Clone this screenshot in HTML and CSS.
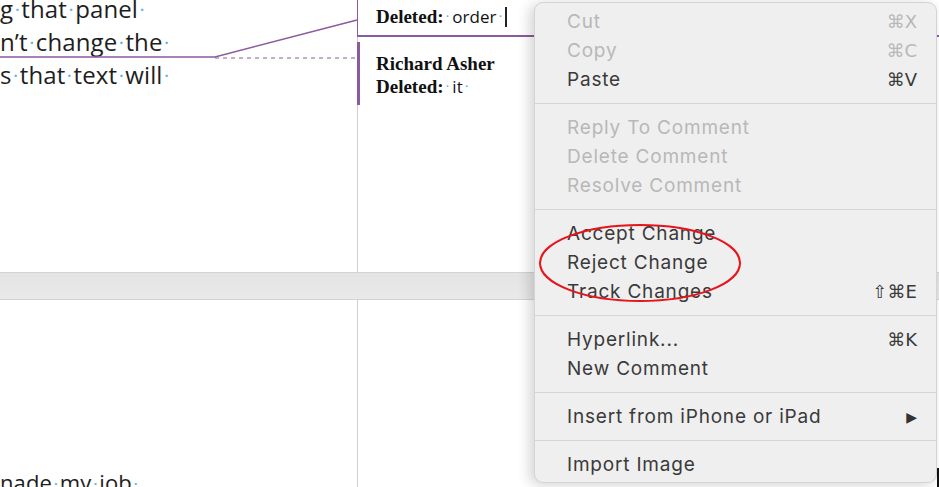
FILE: index.html
```html
<!DOCTYPE html>
<html>
<head>
<meta charset="utf-8">
<link rel="stylesheet" href="styles.css">
</head>
<body>
<div class="screen">
  <div class="area area-top">
    <div class="doc">
      <p class="line">g<span class="sp">·</span>that<span class="sp">·</span>panel<span class="sp">·</span></p>
      <p class="line">n’t<span class="sp">·</span>change<span class="sp">·</span>the<span class="sp">·</span></p>
      <p class="line">s<span class="sp">·</span>that<span class="sp">·</span>text<span class="sp">·</span>will<span class="sp">·</span></p>
    </div>
    <div class="margin">
      <div class="comment c1">
        <div class="cline"><b>Richard Asher</b></div>
        <div class="cline"><b>Deleted:</b><span class="sp">·</span><span class="ins">order</span><span class="sp">·</span><span class="caret"></span></div>
      </div>
      <div class="comment c2">
        <div class="cline"><b>Richard Asher</b></div>
        <div class="cline"><b>Deleted:</b><span class="sp">·</span><span class="ins">it</span><span class="sp">·</span></div>
      </div>
    </div>
  </div>
  <div class="band"></div>
  <div class="area area-bottom">
    <div class="doc doc-bottom">
      <p class="line">nade<span class="sp">·</span>my<span class="sp">·</span>job<span class="sp">·</span></p>
    </div>
    <div class="margin"></div>
  </div>

  <svg class="connector" width="360" height="80" viewBox="0 0 360 80">
    <polyline points="0,57 215,57 357,20" fill="none" stroke="#8c5a9f" stroke-width="1.5"/>
    <line x1="215" y1="58" x2="357" y2="58" stroke="#8c5a9f" stroke-width="1.2" stroke-dasharray="4 4"/>
  </svg>

  <div class="menu">
    <div class="item off"><span>Cut</span><span class="key">⌘X</span></div>
    <div class="item off"><span>Copy</span><span class="key">⌘C</span></div>
    <div class="item"><span>Paste</span><span class="key">⌘V</span></div>
    <div class="sep"></div>
    <div class="item off"><span>Reply To Comment</span></div>
    <div class="item off"><span>Delete Comment</span></div>
    <div class="item off"><span>Resolve Comment</span></div>
    <div class="sep"></div>
    <div class="item"><span>Accept Change</span></div>
    <div class="item"><span>Reject Change</span></div>
    <div class="item"><span>Track Changes</span><span class="key">⇧⌘E</span></div>
    <div class="sep"></div>
    <div class="item"><span>Hyperlink...</span><span class="key">⌘K</span></div>
    <div class="item"><span>New Comment</span></div>
    <div class="sep"></div>
    <div class="item"><span>Insert from iPhone or iPad</span><span class="key arrow">▶</span></div>
    <div class="sep"></div>
    <div class="item"><span>Import Image</span></div>
  </div>

  <svg class="circle" width="206" height="82" viewBox="0 0 206 82">
    <ellipse cx="103" cy="40" rx="100" ry="38" fill="none" stroke="#e8141b" stroke-width="2"/>
  </svg>
  <div class="edge-mark"></div>
</div>
</body>
</html>
```

FILE: styles.css
```css
html, body {
  margin: 0;
  padding: 0;
  background: #ffffff;
}
.screen {
  position: relative;
  width: 939px;
  height: 487px;
  overflow: hidden;
  background: #ffffff;
}
.area {
  display: flex;
}
.area-top {
  height: 272px;
  overflow: hidden;
}
.area-bottom {
  height: 187px;
}
.doc {
  width: 357px;
  flex: none;
  overflow: hidden;
}
.doc .line {
  margin: 0;
  font-family: "Open Sans", Lato, sans-serif;
  font-size: 24px;
  line-height: 32px;
  color: #1e1e1e;
  white-space: nowrap;
  letter-spacing: 0.1px;
}
.area-top .doc .line:first-child {
  margin-top: -7px;
}
.doc-bottom {
  padding-top: 166px;
}
.doc-bottom .line {
  font-size: 22px;
}
.sp {
  color: #5cb6f2;
  font-size: 0.6em;
  font-weight: bold;
  vertical-align: 0.2em;
  margin: 0 2px;
}
.margin {
  flex: 1;
  border-left: 1px solid #cfcfcf;
}
.comment {
  margin-left: -1px;
  font-family: "Liberation Serif", serif;
  font-size: 19px;
  color: #111;
}
.cline {
  line-height: 23px;
  white-space: nowrap;
  display: flex;
  align-items: center;
}
.cline b {
  font-weight: bold;
}
.ins {
  font-family: "Open Sans", Lato, sans-serif;
  font-size: 17px;
  margin-left: 1px;
}
.c1 {
  height: 37px;
  box-sizing: border-box;
  border-left: 1px solid #8c5a9f;
  border-bottom: 2px solid #8c5a9f;
  padding: 0 0 0 18px;
  overflow: hidden;
}
.c1 .cline:first-child {
  margin-top: -18px;
  color: #555;
}
.c2 {
  margin-top: 5px;
  height: 63px;
  box-sizing: border-box;
  border-left: 3px solid #8c5a9f;
  padding: 10px 0 0 16px;
}
.caret {
  display: inline-block;
  width: 2px;
  height: 20px;
  background: #222;
  margin-left: 1px;
}
.band {
  height: 26px;
  background: linear-gradient(#e4e4e4, #e9e9e9);
  border-top: 1px solid #d3d3d3;
  border-bottom: 1px solid #d3d3d3;
}
.connector {
  position: absolute;
  left: 0;
  top: 0;
}
.menu {
  position: absolute;
  left: 534px;
  top: 2px;
  width: 403px;
  height: 481px;
  box-sizing: border-box;
  padding: 4px 0 6px;
  background: #efefef;
  border: 1px solid #d4d4d4;
  border-radius: 9px;
  box-shadow: -4px 2px 14px rgba(0, 0, 0, 0.18);
  font-family: Inter, "Liberation Sans", sans-serif;
  font-size: 19px;
  letter-spacing: 0.8px;
  color: #3a3a3a;
}
.item {
  height: 29px;
  display: flex;
  align-items: center;
  justify-content: space-between;
  padding: 0 19px 0 32px;
}
.item.off {
  color: #b8b8b8;
}
.key {
  font-family: "DejaVu Sans", sans-serif;
  font-size: 18px;
  letter-spacing: 0;
}
.arrow {
  font-size: 14px;
  color: #333;
}
.sep {
  height: 1px;
  background: #d6d6d6;
  margin: 9px 0;
}
.circle {
  position: absolute;
  left: 537px;
  top: 223px;
}
.edge-mark {
  position: absolute;
  left: 937px;
  top: 468px;
  width: 2px;
  height: 19px;
  background: #111;
}
```
